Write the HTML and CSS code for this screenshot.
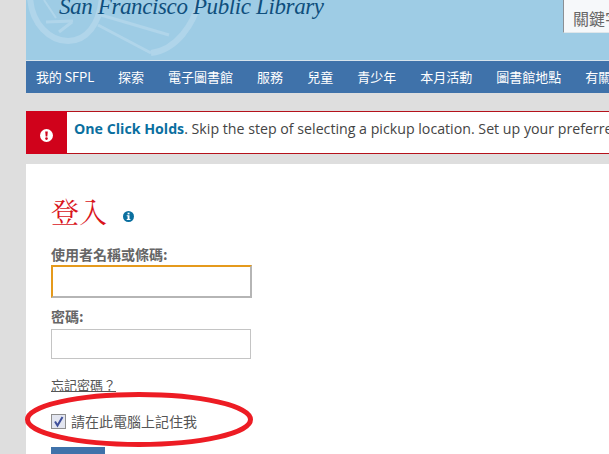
FILE: index.html
```html
<!DOCTYPE html>
<html lang="zh-Hant">
<head>
<meta charset="utf-8">
<title>登入</title>
<link rel="stylesheet" href="styles.css">
</head>
<body>
<div class="page">
  <header class="masthead">
    <svg class="seal" width="220" height="60" viewBox="0 0 220 60" aria-hidden="true">
      <g fill="none" stroke="#b0d5ea">
        <path d="M4 -4C5 25 25 41 42 41C60 41 74 25 76 -4" stroke-width="6"/>
        <path d="M20 22L47 21" stroke-width="3"/>
        <path d="M33 32L46 22" stroke-width="3"/>
        <path d="M18 0L30 18" stroke-width="2"/>
        <path d="M75 15L143 35" stroke-width="3"/>
        <path d="M72 25L125 53" stroke-width="3"/>
        <path d="M125 53C150 50 168 25 174 -2" stroke-width="6"/>
      </g>
    </svg>
    <div class="logo">San Francisco Public Library</div>
    <div class="search">關鍵字</div>
  </header>
  <nav class="nav">
    <a class="nav-first">我的 SFPL</a><a>探索</a><a>電子圖書館</a><a>服務</a><a>兒童</a><a>青少年</a><a>本月活動</a><a>圖書館地點</a><a>有關</a>
  </nav>
  <div class="alert">
    <div class="alert-icon">
      <svg width="13" height="13" viewBox="0 0 13 13" aria-hidden="true"><circle cx="6.5" cy="6.5" r="6.5" fill="#fff"/><path d="M5.2 2.5h2.6L7.3 7.6H5.7z" fill="#d0021b"/><circle cx="6.5" cy="9.6" r="1.3" fill="#d0021b"/></svg>
    </div>
    <p class="alert-text"><b>One Click Holds</b>. Skip the step of selecting a pickup location. Set up your preferred pickup location now and save time.</p>
  </div>
  <main class="panel">
    <div class="title-row">
      <h1>登入</h1>
      <svg class="info" width="11" height="11" viewBox="0 0 11 11" aria-hidden="true"><circle cx="5.5" cy="5.5" r="5.5" fill="#0a6f9f"/><rect x="4.6" y="1.7" width="1.9" height="1.7" fill="#fff"/><path d="M3.7 4.3h2.8v3.6h.9v1H3.7v-1h.9V5.3h-.9z" fill="#fff"/></svg>
    </div>
    <label class="label">使用者名稱或條碼:</label>
    <div class="field focused"></div>
    <label class="label second">密碼:</label>
    <div class="field"></div>
    <a class="forgot">忘記密碼？</a>
    <div class="remember">
      <span class="check"><svg width="13" height="13" viewBox="0 0 13 13" aria-hidden="true"><path d="M3 6.5L5.5 10.5L10.5 2" fill="none" stroke="#3f4f9a" stroke-width="2"/></svg></span>
      <span>請在此電腦上記住我</span>
    </div>
    <div class="submit"></div>
  </main>
</div>
<svg class="annotation" width="240" height="62" viewBox="0 0 240 62" aria-hidden="true"><ellipse cx="119" cy="30.5" rx="111.5" ry="25" fill="none" stroke="#ed1c24" stroke-width="5"/></svg>
</body>
</html>
```
FILE: styles.css
```css
html, body { margin: 0; padding: 0; height: 100%; overflow: hidden; }
body { background: #dedede; font-family: "Open Sans", "Noto Sans CJK TC", sans-serif; position: relative; }
.page { width: 583px; margin-left: 26px; overflow: hidden; }
.masthead { position: relative; height: 60px; background: #9ecce5; border-bottom: 1px solid #d5e3ec; overflow: hidden; }
.seal { position: absolute; left: 0; top: 0; }
.logo { position: relative; margin: -8px 0 0 33px; font: italic 23px/30px "Liberation Serif", serif; letter-spacing: -0.38px; color: #0f4f7d; white-space: nowrap; }
.search { position: absolute; left: 537px; top: 0; width: 46px; height: 33px; box-sizing: border-box; padding: 8px 0 0 9px; background: #f6f8fa; border-left: 1px solid #8a8f94; border-bottom: 1px solid #dfe6ea; font: 16px/20px "Noto Sans CJK TC", sans-serif; color: #666; white-space: nowrap; overflow: hidden; }
.nav { display: flex; gap: 24px; height: 32px; padding-left: 10px; background: #3f72aa; align-items: center; white-space: nowrap; font: 13px/18px "Noto Sans CJK TC", sans-serif; color: #fff; overflow: hidden; }
.nav-first { letter-spacing: -0.15px; }
.alert { display: flex; height: 43px; margin-top: 18px; box-sizing: border-box; background: #fff; border-top: 1px solid #b5121b; border-bottom: 1px solid #b5121b; }
.alert-icon { flex: none; width: 41px; margin: -1px 0; background: #d0021b; display: flex; align-items: center; justify-content: center; padding-top: 6px; box-sizing: border-box; }
.alert-icon svg { display: block; }
.alert-text { margin: 8px 0 0 7px; font-size: 14.2px; line-height: 18px; color: #444; white-space: nowrap; overflow: hidden; }
.alert-text b { color: #0a6f9f; }
.panel { margin-top: 10px; height: 300px; background: #fff; padding: 30px 0 0 25px; box-sizing: border-box; }
.title-row { display: flex; align-items: flex-end; height: 34px; }
h1 { margin: 0; font: 400 28px/34px "Noto Serif CJK TC", "Noto Sans CJK TC", serif; color: #d9141b; }
.info { margin: 0 0 6px 16px; }
.label { display: block; margin-top: 17px; font: 700 14px/18px "Noto Sans CJK TC", sans-serif; color: #666; }
.label.second { margin-top: 9px; }
.field { width: 200px; height: 30px; margin-top: 4px; box-sizing: border-box; border: 1px solid #c4c4c4; background: #fff; }
.focused { width: 201px; height: 33px; margin-top: 2px; border: 2px solid #b5b5b5; border-left-color: #e59a1c; border-top-color: #e59a1c; }
.forgot { display: block; width: 65px; margin-top: 17px; font: 13px/18px "Noto Sans CJK TC", sans-serif; color: #555; text-decoration: underline; white-space: nowrap; }
.remember { display: flex; align-items: center; gap: 5px; margin-top: 18px; font: 14px/18px "Noto Sans CJK TC", sans-serif; color: #555; }
.check { width: 13px; height: 13px; border: 1px solid #8e8e8e; background: #e2e5f0; display: block; }
.check svg { display: block; }
.submit { width: 54px; height: 30px; margin-top: 17px; background: #3f72aa; }
.annotation { position: absolute; left: 20px; top: 389px; }
```
